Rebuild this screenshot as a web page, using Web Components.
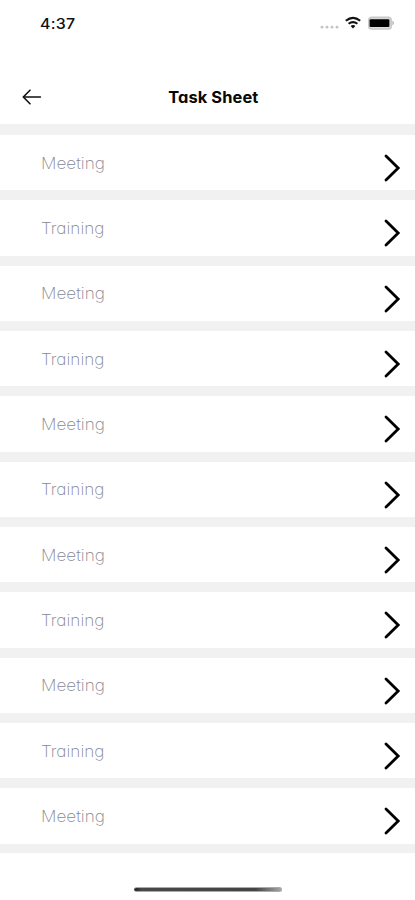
<!DOCTYPE html>
<html lang="en"><head><meta charset="utf-8"><title>Task Sheet</title>
<style>
body{margin:0;background:#fff;font-family:Inter,"Open Sans",sans-serif;font-feature-settings:"cv11" 1}
</style></head><body>
<task-screen></task-screen>
<script>
const define=(name,html,setup)=>customElements.define(name,class extends HTMLElement{
  constructor(){super();const t=document.createElement('template');t.innerHTML=html;
    this.attachShadow({mode:'open'}).append(t.content.cloneNode(true));}
  connectedCallback(){if(setup)setup(this,this.shadowRoot);}
});

define('status-bar',`<style>
:host{display:flex;height:46px;box-sizing:border-box;padding:0 20px 0 40px;align-items:center;justify-content:space-between}
.time{font-size:14.5px;font-weight:500;color:#111;letter-spacing:.2px;line-height:46px;margin-top:2px;transform:scaleX(1.1);transform-origin:left}
svg{display:block}
</style><span class="time">4:37</span>
<svg width="75" height="18" viewBox="320 14 75 18">
<g fill="#c4c4c4"><circle cx="322" cy="27.2" r="1.4"/><circle cx="327" cy="27.2" r="1.4"/><circle cx="332" cy="27.2" r="1.4"/><circle cx="337" cy="27.2" r="1.4"/></g>
<g fill="none" stroke="#111" stroke-width="2.1"><path d="M345.8 20.8Q353 14.8 360.2 20.8"/><path d="M348.6 23.8Q353 20.3 357.4 23.8"/></g><path d="M350.6 26Q353 24.2 355.4 26L353 28.6Z" fill="#111"/>
<rect x="368.8" y="17.4" width="22.4" height="11.6" rx="2.8" fill="#ddd" stroke="#c9c9c9" stroke-width="1.6"/><rect x="369.6" y="19.3" width="19.8" height="7.8" rx="1" fill="#000"/><path d="M392.3 20.5Q396 22.8 392.3 25.4Z" fill="#bbb"/>
</svg>`);

define('page-header',`<style>
:host{display:grid;grid-template-columns:60px 1fr 60px;height:78px;align-items:center}
svg{display:block;margin:24px 0 0 22px}
h1{margin:26px 0 0;text-align:center;font-size:15.5px;line-height:24px;font-weight:650;letter-spacing:.1px;color:#080808;padding-left:11px;white-space:nowrap;transform:scaleX(1.06)}
</style><svg width="20" height="18" viewBox="0 0 20 18" fill="none" stroke="#111" stroke-linecap="round" stroke-linejoin="round"><path d="M1.5 9H18.5" stroke-width="1.3"/><path d="M8 2.2L1.3 9L8 15.8" stroke-width="1.6"/></svg>
<h1><slot></slot></h1>`);

define('task-row',`<style>
:host{display:flex;height:55.34px;box-sizing:border-box;padding:0 14px 0 41px;justify-content:space-between;align-items:center;background:#fff}
span{font-size:16.2px;font-weight:250;line-height:24px;color:#868992;transform:scaleX(1.06);transform-origin:left}
svg{display:block;margin-top:11px}
</style><span><slot></slot></span>
<svg width="18" height="30" viewBox="0 0 18 30"><path d="M3 3L15.2 15L3 27" fill="none" stroke="#000" stroke-width="2.8" stroke-linecap="round"/></svg>`);

define('task-list',`<style>
:host{display:flex;flex-direction:column;gap:10px;padding:11px 0 9.5px;background:#f1f1f1}
</style><slot></slot>`);

define('home-indicator',`<style>
:host{display:flex;justify-content:center;padding-top:34px}
div{width:148px;height:5px;border-radius:3px;box-sizing:border-box;border:1px solid #aaa;border-width:1px 0;background:linear-gradient(90deg,#222,#484848 5%,#444 82%,#aaa)}
</style><div></div>`);

define('task-screen',`<style>
:host{display:block;height:900px;overflow:hidden}
</style><status-bar></status-bar><page-header>Task Sheet</page-header><task-list></task-list><home-indicator></home-indicator>`,
(el,root)=>{const list=root.querySelector('task-list');
for(let i=0;i<11;i++){const r=document.createElement('task-row');r.textContent=i%2?'Training':'Meeting';list.append(r);}});
</script>
</body></html>
